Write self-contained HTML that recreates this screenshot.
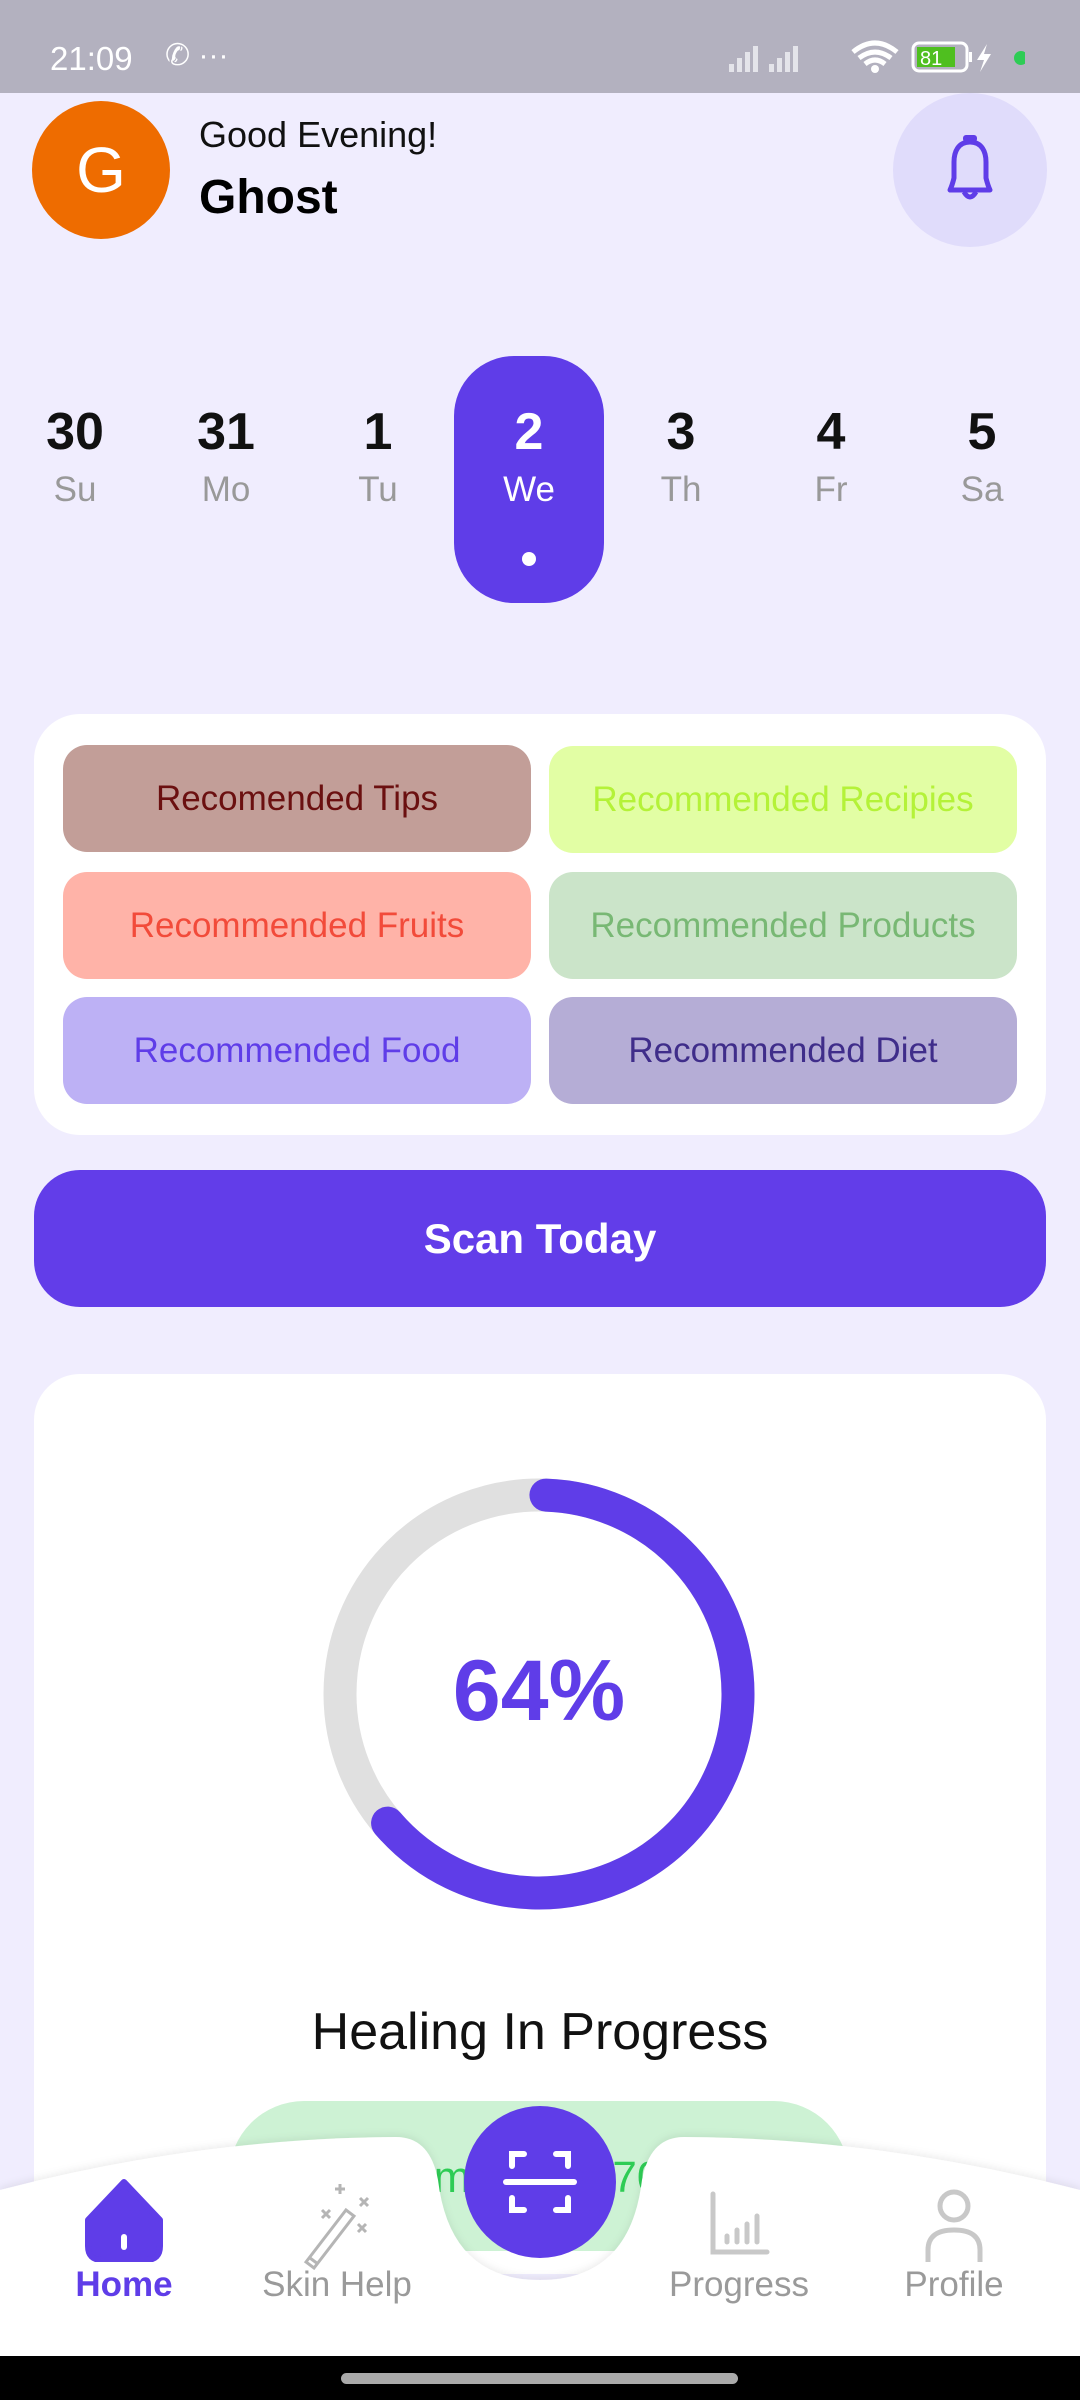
<!DOCTYPE html>
<html><head><meta charset="utf-8"><style>
*{margin:0;padding:0;box-sizing:border-box}
body{width:1080px;height:2400px;background:#f0edfe;position:relative;overflow:hidden;font-family:"Liberation Sans",sans-serif}
.a{position:absolute}
.sb{left:0;top:0;width:1080px;height:93px;background:#b3b1bf}
.day{position:absolute;width:150px;text-align:center}
.day .n{position:absolute;top:0;width:150px;font-size:52px;font-weight:bold;color:#111}
.day .l{position:absolute;top:68px;width:150px;font-size:35px;color:#999}
.btn{position:absolute;height:107px;width:468px;border-radius:24px;display:flex;align-items:center;justify-content:center;font-size:35px}
.lab{position:absolute;font-size:35px;color:#9a9a9a;text-align:center;width:200px}
</style></head><body>
<div class="a sb"></div>
<div class="a" style="left:50px;top:40px;font-size:33px;color:#fff">21:09</div>
<div class="a" style="left:165px;top:38px;font-size:30px;color:#fff">✆ ···</div>
<svg class="a" style="left:725px;top:38px" width="300" height="40">
<g fill="#e4e4ea"><rect x="4" y="26" width="5" height="8"/><rect x="12" y="20" width="5" height="14"/><rect x="20" y="14" width="5" height="20"/><rect x="28" y="8" width="5" height="26"/>
<rect x="44" y="26" width="5" height="8"/><rect x="52" y="20" width="5" height="14"/><rect x="60" y="14" width="5" height="20"/><rect x="68" y="8" width="5" height="26"/></g>
<path d="M128 14 Q150 -4 172 14 M134 20 Q150 8 166 20 M140 26 Q150 18 160 26" stroke="#fff" stroke-width="5" fill="none"/><circle cx="150" cy="31" r="4" fill="#fff"/>
<rect x="188" y="5" width="54" height="28" rx="6" fill="none" stroke="#fff" stroke-width="3"/><rect x="192" y="9" width="38" height="20" fill="#4fbf1f"/><text x="195" y="27" font-size="20" fill="#fff" font-family="Liberation Sans">81</text>
<rect x="244" y="14" width="3" height="10" fill="#fff"/><path d="M262 6 L252 22 L259 22 L255 34 L266 16 L259 16 Z" fill="#fff"/><circle cx="296" cy="20" r="7" fill="#2ecc55"/></svg>

<div class="a" style="left:32px;top:101px;width:138px;height:138px;border-radius:50%;background:#ee6c00;color:#fff;font-size:64px;display:flex;align-items:center;justify-content:center">G</div>
<div class="a" style="left:199px;top:114px;font-size:36px;color:#111">Good Evening!</div>
<div class="a" style="left:199px;top:170px;font-size:48px;font-weight:bold;color:#000">Ghost</div>
<div class="a" style="left:893px;top:93px;width:154px;height:154px;border-radius:50%;background:#e0dcfb"></div>
<svg class="a" style="left:930px;top:130px" width="80" height="80" viewBox="0 0 80 80"><rect x="33" y="5" width="14" height="7" rx="3" fill="#5f3de8"/><path d="M40 12 C28 12 24 22 24 32 L24 48 Q22 56 20 60 L60 60 Q58 56 56 48 L56 32 C56 22 52 12 40 12 Z" fill="none" stroke="#5f3de8" stroke-width="5" stroke-linejoin="round"/><path d="M34 62 Q40 72 46 62" fill="none" stroke="#5f3de8" stroke-width="5"/></svg>

<div class="a" style="left:454px;top:356px;width:150px;height:247px;border-radius:60px;background:#5f3de8"></div>
<div class="day" style="left:0;top:402px"><div class="n">30</div><div class="l">Su</div></div>
<div class="day" style="left:151px;top:402px"><div class="n">31</div><div class="l">Mo</div></div>
<div class="day" style="left:303px;top:402px"><div class="n">1</div><div class="l">Tu</div></div>
<div class="day" style="left:454px;top:402px"><div class="n" style="color:#fff">2</div><div class="l" style="color:#fff">We</div></div>
<div class="day" style="left:606px;top:402px"><div class="n">3</div><div class="l">Th</div></div>
<div class="day" style="left:756px;top:402px"><div class="n">4</div><div class="l">Fr</div></div>
<div class="day" style="left:907px;top:402px"><div class="n">5</div><div class="l">Sa</div></div>
<div class="a" style="left:522px;top:552px;width:14px;height:14px;border-radius:50%;background:#fff"></div>

<div class="a" style="left:34px;top:714px;width:1012px;height:421px;border-radius:46px;background:#fff"></div>
<div class="btn" style="left:63px;top:745px;background:#c29e98;color:#6b1010">Recomended Tips</div>
<div class="btn" style="left:549px;top:746px;background:#e2fea4;color:#b4f238">Recommended Recipies</div>
<div class="btn" style="left:63px;top:872px;background:#ffb3a8;color:#f24b3a">Recommended Fruits</div>
<div class="btn" style="left:549px;top:872px;background:#cbe4c9;color:#78b874">Recommended Products</div>
<div class="btn" style="left:63px;top:997px;background:#bdb1f5;color:#5f3de8">Recommended Food</div>
<div class="btn" style="left:549px;top:997px;background:#b5add6;color:#3f2d8a">Recommended Diet</div>

<div class="a" style="left:34px;top:1170px;width:1012px;height:137px;border-radius:46px;background:#623de9;color:#fff;font-size:42px;font-weight:bold;display:flex;align-items:center;justify-content:center">Scan Today</div>

<div class="a" style="left:34px;top:1374px;width:1012px;height:900px;border-radius:46px;background:#fff"></div>
<svg class="a" style="left:0;top:1400px" width="1080" height="600"><circle cx="539" cy="294" r="199" fill="none" stroke="#e0e0e0" stroke-width="33"/><circle cx="539" cy="294" r="199" fill="none" stroke="#5f3de8" stroke-width="33" stroke-linecap="round" stroke-dasharray="790 1300" transform="rotate(-88 539 294)"/></svg>
<div class="a" style="left:339px;top:1642px;width:400px;text-align:center;font-size:86px;font-weight:bold;color:#5f3de8">64%</div>
<div class="a" style="left:240px;top:2002px;width:600px;text-align:center;font-size:52px;color:#111">Healing In Progress</div>
<div class="a" style="left:229px;top:2101px;width:620px;height:150px;border-radius:75px;background:#cdf2d4;color:#2ecc55;font-size:44px;text-align:center;padding-top:52px">Completion 70%</div>

<svg class="a" style="left:0;top:2120px" width="1080" height="240"><defs><filter id="s" x="-10%" y="-30%" width="120%" height="160%"><feDropShadow dx="0" dy="-2" stdDeviation="4" flood-color="#000" flood-opacity="0.08"/></filter></defs>
<path d="M0 70 Q200 18 396 17 Q430 17 438 60 Q450 160 540 160 Q630 160 642 60 Q650 17 684 17 Q880 18 1080 70 L1080 240 L0 240 Z" fill="#fff" filter="url(#s)"/></svg>
<div class="a" style="left:464px;top:2106px;width:152px;height:152px;border-radius:50%;background:#5f3de8"></div>
<svg class="a" style="left:500px;top:2142px" width="80" height="80" viewBox="0 0 80 80" fill="none" stroke="#fff" stroke-width="6" stroke-linecap="round"><path d="M12 24 V12 H24 M56 12 H68 V24 M68 56 V68 H56 M24 68 H12 V56"/><path d="M6 40 H74"/></svg>
<svg class="a" style="left:84px;top:2178px" width="80" height="84" viewBox="0 0 80 84"><path d="M40 4 L76 42 L76 68 Q76 82 62 82 L18 82 Q4 82 4 68 L4 42 Z" fill="#5f3de8" stroke="#5f3de8" stroke-width="6" stroke-linejoin="round"/><rect x="37" y="56" width="6" height="16" rx="3" fill="#fff"/></svg>
<svg class="a" style="left:300px;top:2180px" width="80" height="90" viewBox="0 0 80 90" fill="none" stroke="#b5b5b5" stroke-width="3"><path d="M6 82 L46 30 L54 36 L14 88 Z M10 78 L18 84"/><path d="M40 4 V14 M35 9 H45 M22 30 L30 38 M30 30 L22 38 M60 18 L68 26 M68 18 L60 26 M58 44 L66 52 M66 44 L58 52"/></svg>
<svg class="a" style="left:705px;top:2190px" width="70" height="70" viewBox="0 0 70 70" fill="none" stroke="#c8c8c8" stroke-width="5" stroke-linecap="round"><path d="M8 4 V62 H62"/><path d="M22 52 V46 M32 52 V40 M42 52 V34 M52 52 V26"/></svg>
<svg class="a" style="left:922px;top:2186px" width="64" height="80" viewBox="0 0 64 80" fill="none" stroke="#c8c8c8" stroke-width="5"><circle cx="32" cy="20" r="14"/><path d="M6 76 V64 Q6 44 32 44 Q58 44 58 64 V76"/></svg>
<div class="lab" style="left:24px;top:2265px;color:#5f3de8;font-weight:bold">Home</div>
<div class="lab" style="left:237px;top:2265px">Skin Help</div>
<div class="lab" style="left:639px;top:2265px">Progress</div>
<div class="lab" style="left:854px;top:2265px">Profile</div>
<div class="a" style="left:0;top:2356px;width:1080px;height:44px;background:#000"></div>
<div class="a" style="left:341px;top:2373px;width:397px;height:11px;border-radius:6px;background:#aaa"></div>
</body></html>
